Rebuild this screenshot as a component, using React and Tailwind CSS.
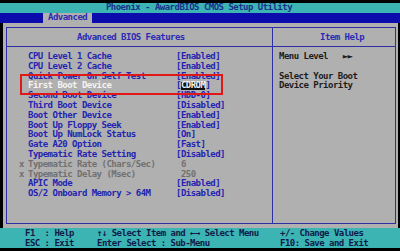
import React from "react";

const rows = [
  { label: "CPU Level 1 Cache", value: "[Enabled]" },
  { label: "CPU Level 2 Cache", value: "[Enabled]" },
  { label: "Quick Power On Self Test", value: "[Enabled]" },
  { label: "First Boot Device", value: "CDROM", sel: true },
  { label: "Second Boot Device", value: "[HDD-0]" },
  { label: "Third Boot Device", value: "[Disabled]" },
  { label: "Boot Other Device", value: "[Enabled]" },
  { label: "Boot Up Floppy Seek", value: "[Enabled]" },
  { label: "Boot Up NumLock Status", value: "[On]" },
  { label: "Gate A20 Option", value: "[Fast]" },
  { label: "Typematic Rate Setting", value: "[Disabled]" },
  { label: "Typematic Rate (Chars/Sec)", value: " 6", dim: true },
  { label: "Typematic Delay (Msec)", value: " 250", dim: true },
  { label: "APIC Mode", value: "[Enabled]" },
  { label: "OS/2 Onboard Memory > 64M", value: "[Disabled]" },
];

export default function App() {
  return (
    <div
      className="w-[400px] h-[251px] bg-black flex flex-col pt-[3px] overflow-hidden font-bold text-[9px] tracking-[-0.52px] whitespace-pre leading-none"
      style={{ fontFamily: '"DejaVu Sans Mono", "Liberation Mono", monospace' }}
    >
      {/* title bar */}
      <div className="h-[9.8px] bg-[#3cb4b4] text-[#1a2f8c] flex items-center justify-center pr-[2px]">
        Phoenix - AwardBIOS CMOS Setup Utility
      </div>
      {/* menu bar */}
      <div className="h-[9.8px] bg-[#0c0cac] flex items-stretch pl-[43px]">
        <div className="w-[49px] bg-[#b0b0b0] text-[#2a2ab0] flex items-center pl-[5px]">Advanced</div>
      </div>
      {/* main */}
      <div className="relative h-[205.8px] bg-[#b0b0b0] ml-[3px] mr-[2px] pl-[3px] pr-[2px] pt-[4.5px] pb-[4px] flex flex-col">
        <div className="flex-1 border border-[#2e2ea4] flex">
          {/* left panel */}
          <div className="w-[266px] border-r border-[#2e2ea4] flex flex-col">
            <div className="h-[19px] border-b border-[#2e2ea4] flex items-center pl-[70px] text-[#2a2ab4]">
              Advanced BIOS Features
            </div>
            <div className="pt-[4.6px] flex flex-col">
              {rows.map((r, i) => (
                <div key={i} className="h-[9.8px] flex items-center pl-[12px]">
                  <span className="w-[9px] text-[#6e6e6e]">{r.dim ? "x" : ""}</span>
                  <span
                    className={
                      "w-[148px] " +
                      (r.sel ? "text-[#f4f4f4]" : r.dim ? "text-[#707070]" : "text-[#2424b0]")
                    }
                  >
                    {r.label}
                  </span>
                  {r.sel ? (
                    <span className="flex items-center text-[#2424b0]">
                      [<span className="bg-[#101010] text-[#f4f4f4] h-[8px] flex items-center">CDROM</span>]
                    </span>
                  ) : (
                    <span className={r.dim ? "text-[#707070]" : "text-[#2424b0]"}>{r.value}</span>
                  )}
                </div>
              ))}
            </div>
          </div>
          {/* right panel */}
          <div className="flex-1 flex flex-col">
            <div className="h-[19px] border-b border-[#2e2ea4] flex items-center pl-[47px] text-[#2a2ab4]">
              Item Help
            </div>
            <div className="pt-[4.6px] pl-[6px] flex flex-col text-[#1c1c1c]">
              <div className="h-[9.8px] flex items-center">Menu Level   ►►</div>
              <div className="h-[9.8px]" />
              <div className="h-[9.8px] flex items-center">Select Your Boot</div>
              <div className="h-[9.8px] flex items-center">Device Priority</div>
            </div>
          </div>
        </div>
        {/* red annotation box */}
        <div className="absolute left-[17px] top-[51.4px] w-[203px] h-[21px] border-2 border-[#e01818]" />
      </div>
      {/* footer */}
      <div className="h-[19.6px] bg-[#3cb4b4] text-[#101a48] flex flex-col">
        <div className="h-[9.8px] flex items-center">
          <span className="pl-[25px] w-[97px]">F1  : Help</span>
          <span className="w-[183px]">↑↓ Select Item and ←→ Select Menu</span>
          <span>+/- Change Values</span>
        </div>
        <div className="h-[9.8px] flex items-center">
          <span className="pl-[25px] w-[97px]">ESC : Exit</span>
          <span className="w-[183px]">Enter Select : Sub-Menu</span>
          <span>F10: Save and Exit</span>
        </div>
      </div>
    </div>
  );
}
